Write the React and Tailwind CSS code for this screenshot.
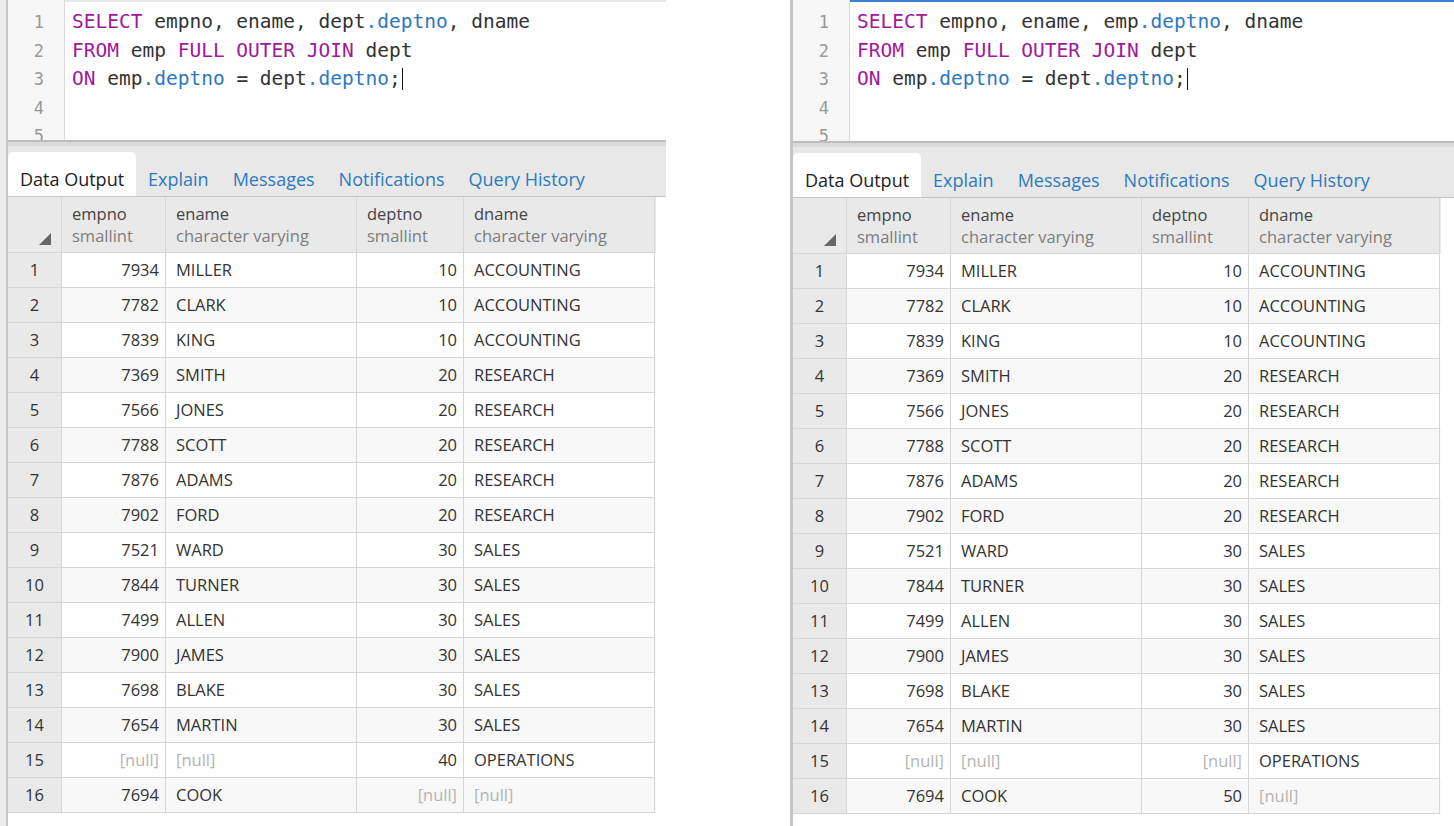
import React from 'react'

const left = [
  [7934, 'MILLER', 10, 'ACCOUNTING'],
  [7782, 'CLARK', 10, 'ACCOUNTING'],
  [7839, 'KING', 10, 'ACCOUNTING'],
  [7369, 'SMITH', 20, 'RESEARCH'],
  [7566, 'JONES', 20, 'RESEARCH'],
  [7788, 'SCOTT', 20, 'RESEARCH'],
  [7876, 'ADAMS', 20, 'RESEARCH'],
  [7902, 'FORD', 20, 'RESEARCH'],
  [7521, 'WARD', 30, 'SALES'],
  [7844, 'TURNER', 30, 'SALES'],
  [7499, 'ALLEN', 30, 'SALES'],
  [7900, 'JAMES', 30, 'SALES'],
  [7698, 'BLAKE', 30, 'SALES'],
  [7654, 'MARTIN', 30, 'SALES'],
  [null, null, 40, 'OPERATIONS'],
  [7694, 'COOK', null, null],
]

const right = left.map((r, i) => {
  if (i === 14) return [null, null, null, 'OPERATIONS']
  if (i === 15) return [7694, 'COOK', 50, null]
  return r
})

const KW = 'text-[#a0199b]'
const PR = 'text-[#2f78c0]'

function Code({ col }) {
  const lines = [
    [
      ['SELECT', KW], [' empno, ename, ' + col, ''], ['.deptno', PR], [', dname', ''],
    ],
    [
      ['FROM', KW], [' emp ', ''], ['FULL OUTER JOIN', KW], [' dept', ''],
    ],
    [
      ['ON', KW], [' emp', ''], ['.deptno', PR], [' = dept', ''], ['.deptno', PR], [';', ''],
    ],
    [],
    [],
  ]
  return lines.map((parts, i) => (
    <div key={i} className="h-[28.6px] leading-[28.6px] whitespace-pre flex items-center">
      {parts.map(([t, c], j) => (
        <span key={j} className={c}>{t}</span>
      ))}
      {i === 2 && <span className="inline-block w-px h-[22px] bg-[#111] ml-px" />}
    </div>
  ))
}

function Cell({ v, num }) {
  const isNull = v === null
  return (
    <div
      className={`h-[35px] flex items-center border-r border-b border-[#d6d6d6] ${
        num ? 'justify-end pr-[6px]' : 'pl-[10px]'
      } ${isNull ? 'text-[#b4b4b4]' : 'text-[#333]'}`}
    >
      {isNull ? '[null]' : v}
    </div>
  )
}

function Panel({ rows, col, focused }) {
  const cols = 'grid grid-cols-[54px_104px_191px_107px_191px]'
  return (
    <div className="flex-1 h-[826px] flex flex-col">
      <div className={`flex ${focused ? 'h-[141px]' : 'h-[140px]'}`}>
        <div className="w-[57px] bg-[#f7f7f7] border-r border-[#dcdcdc] pt-[8px] pr-[20px] text-right text-[#999] text-[17px] font-['DejaVu_Sans_Mono',monospace]">
          {[1, 2, 3, 4, 5].map((n) => (
            <div key={n} className="h-[28.6px] leading-[28.6px]">{n}</div>
          ))}
        </div>
        <div
          className={`flex-1 overflow-hidden pl-[7px] pt-[6px] text-[19.5px] text-[#333] font-['DejaVu_Sans_Mono',monospace] border-t-2 ${
            focused ? 'border-[#3b7fd0]' : 'border-[#e8e8e8]'
          }`}
        >
          <Code col={col} />
        </div>
      </div>
      <div className="h-[6px] bg-[#dadada] border-t-2 border-[#bdbdbd]" />
      <div className="h-[51px] bg-[#e8e8e8] border-b border-[#c4c4c4] flex items-end text-[18px] font-['Open_Sans',sans-serif]">
        {['Data Output', 'Explain', 'Messages', 'Notifications', 'Query History'].map((t, i) => (
          <div
            key={t}
            className={`h-[44px] pt-[10px] px-3 flex items-center ${
              i === 0 ? 'bg-white rounded-t-[5px] text-[#222]' : 'text-[#2d7bbd]'
            }`}
          >
            {t}
          </div>
        ))}
      </div>
      <div className="w-[648px] text-[16.5px] font-['Open_Sans',sans-serif]">
        <div className={`${cols} h-[56px] bg-[#e9e9e9]`}>
          <div className="border-r border-b border-[#d6d6d6] flex items-end justify-end pr-[10px] pb-[7px]">
            <svg width="12" height="12" viewBox="0 0 12 12">
              <polygon points="12,0 12,12 0,12" fill="#666" />
            </svg>
          </div>
          {[
            ['empno', 'smallint'],
            ['ename', 'character varying'],
            ['deptno', 'smallint'],
            ['dname', 'character varying'],
          ].map(([n, t]) => (
            <div key={n} className="border-r border-b border-[#d6d6d6] pl-[10px] pt-[6px] leading-[22px]">
              <div className="text-[#444]">{n}</div>
              <div className="text-[#7d7d7d]">{t}</div>
            </div>
          ))}
        </div>
        {rows.map((r, i) => (
          <div key={i} className={`${cols} ${i % 2 ? 'bg-[#f8f8f8]' : 'bg-white'}`}>
            <div className="h-[35px] flex items-center justify-center bg-[#e9e9e9] border-r border-b border-[#d6d6d6] text-[#333]">
              {i + 1}
            </div>
            <Cell v={r[0]} num />
            <Cell v={r[1]} />
            <Cell v={r[2]} num />
            <Cell v={r[3]} />
          </div>
        ))}
      </div>
    </div>
  )
}

export default function App() {
  return (
    <div className="w-[1454px] h-[826px] bg-white flex overflow-hidden">
      <div className="w-[666px] flex shrink-0">
        <div className="w-[6px] bg-[#ededed]" />
        <div className="w-[2px] bg-[#c6c6c6]" />
        <Panel rows={left} col="dept" focused={false} />
      </div>
      <div className="w-[124px] shrink-0" />
      <div className="w-[664px] flex shrink-0">
        <div className="w-[3px] bg-[#c6c6c6]" />
        <Panel rows={right} col="emp" focused />
      </div>
    </div>
  )
}
